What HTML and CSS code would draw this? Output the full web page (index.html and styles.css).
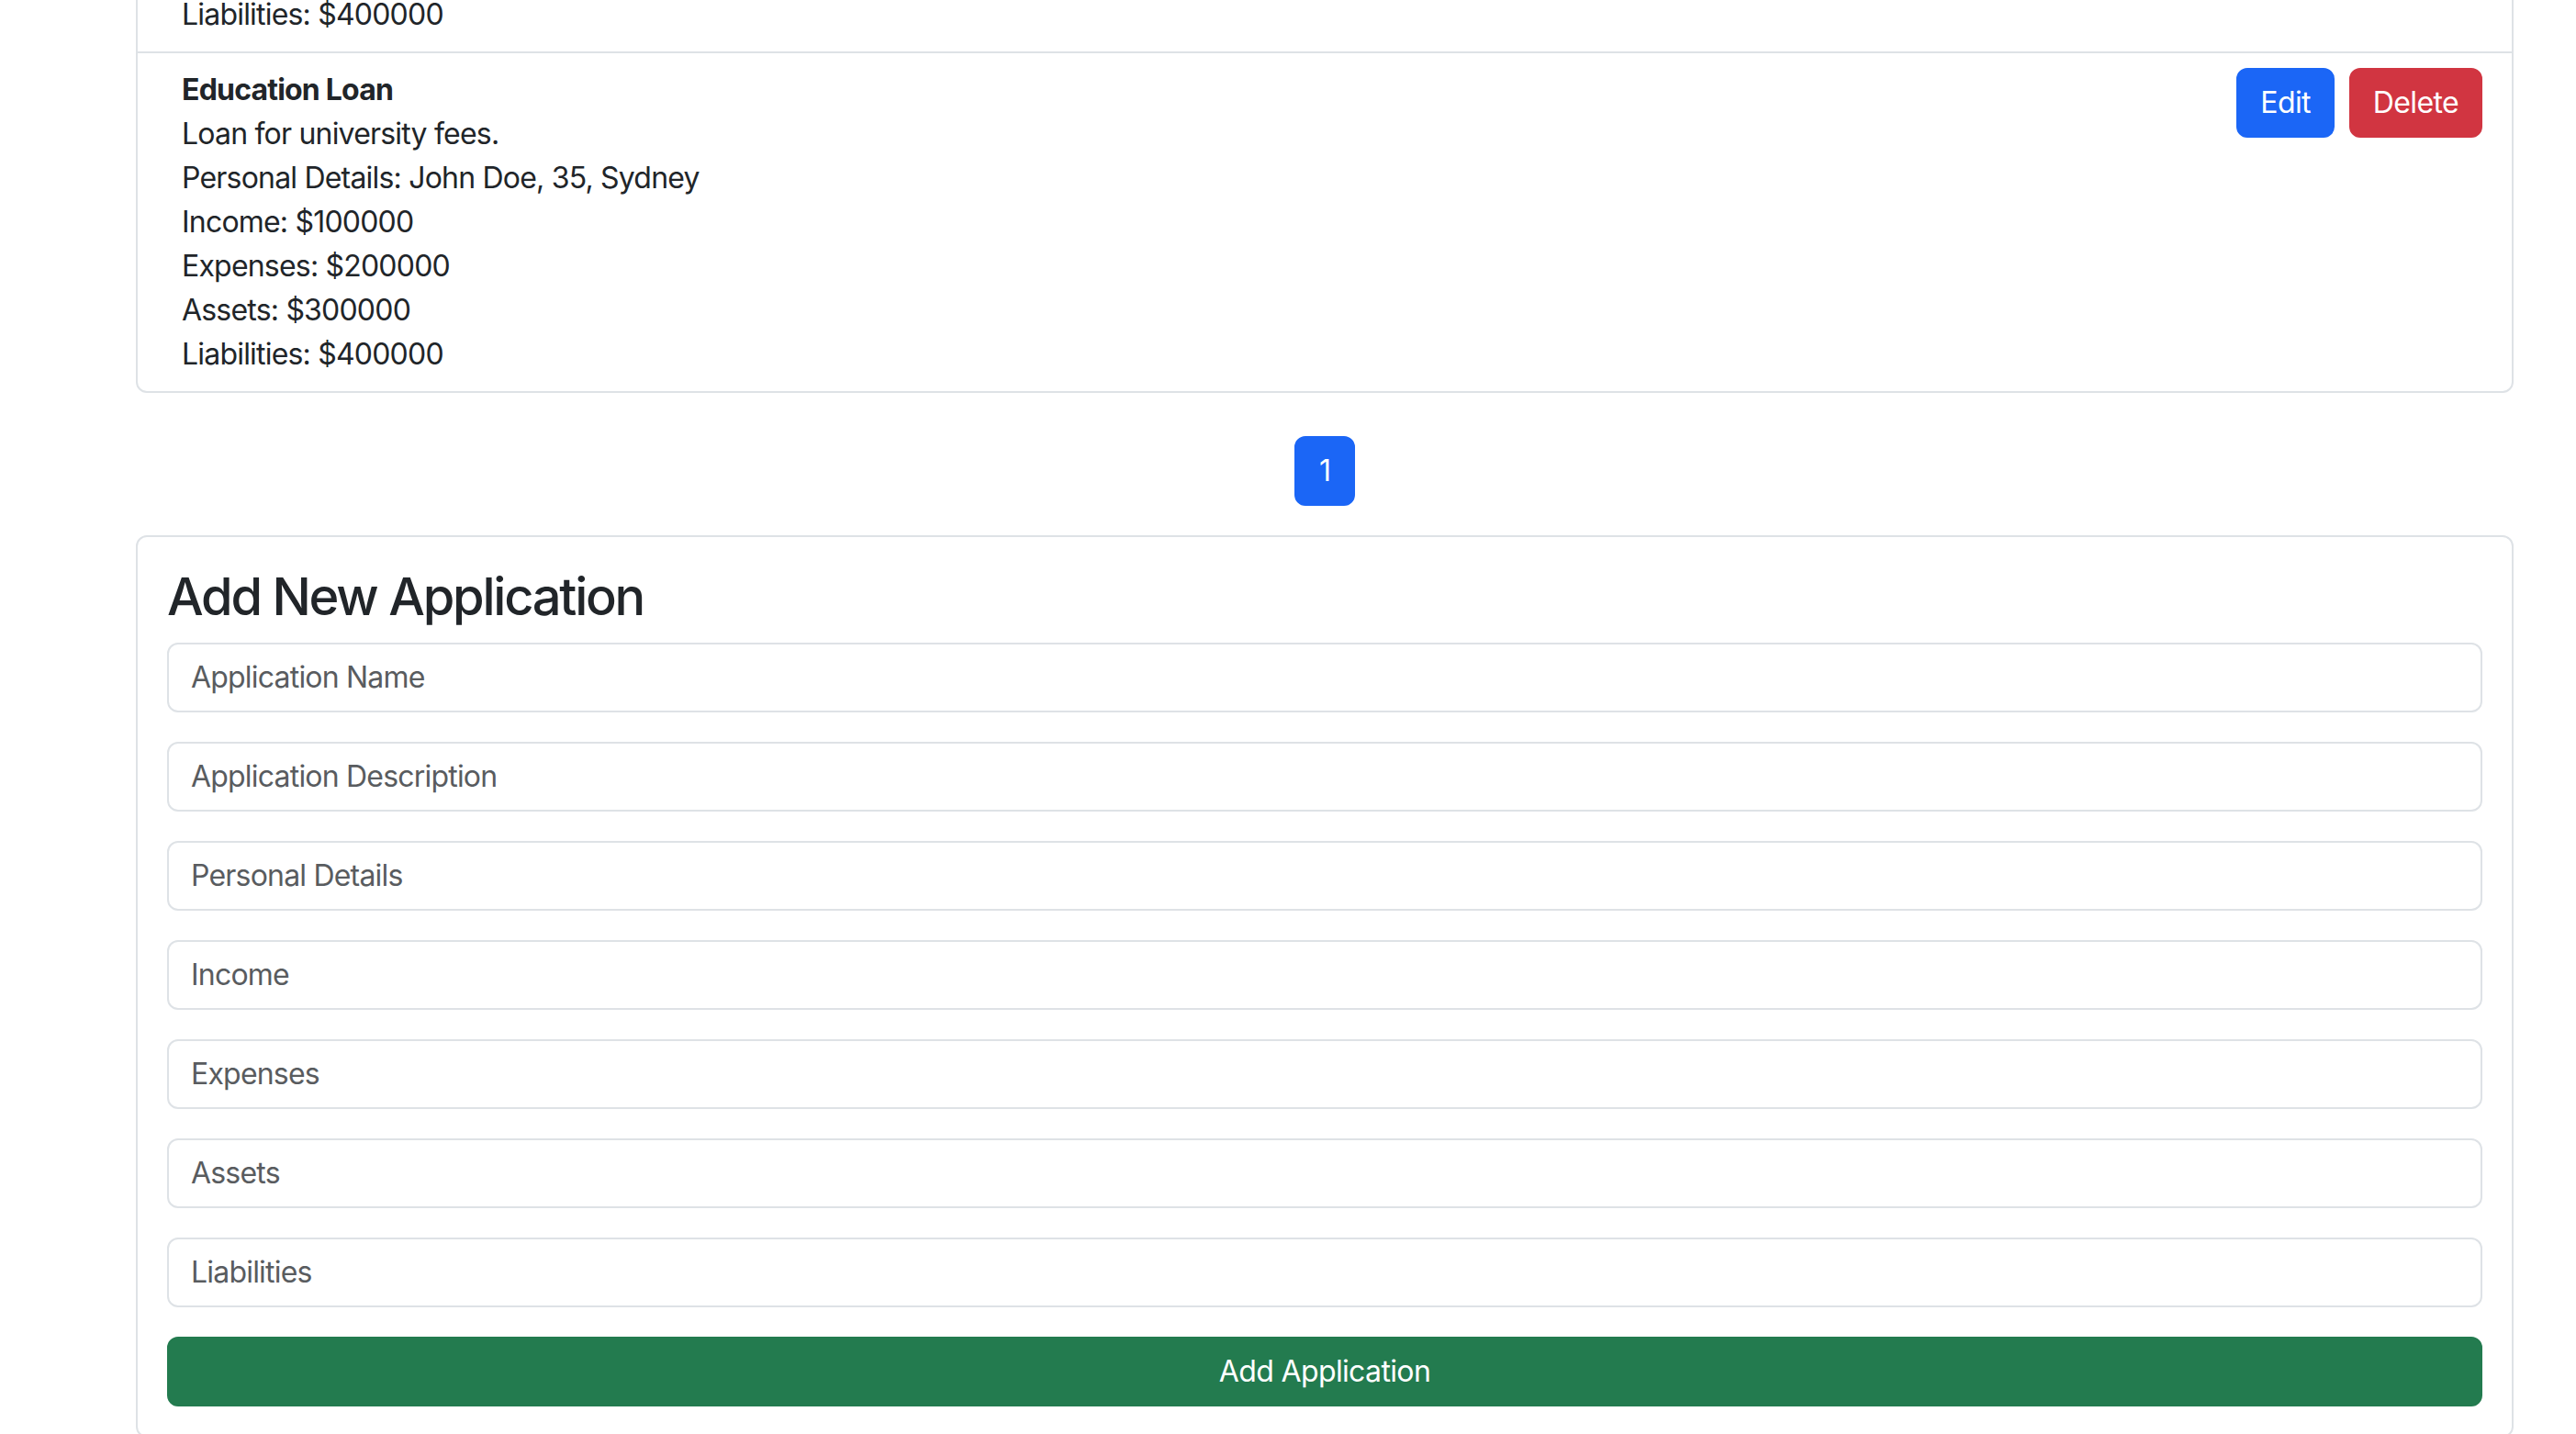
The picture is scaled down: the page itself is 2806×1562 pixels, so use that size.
FILE: index.html
```html
<!DOCTYPE html>
<html lang="en">
<head>
<meta charset="utf-8">
<title>Loan Applications</title>
<link rel="stylesheet" href="styles.css">
</head>
<body>
<main class="container">
  <ul class="app-list">
    <li class="app-item">
      <div class="app-info">
        <strong class="app-title">Home Loan</strong>
        <div>Loan for buying a house.</div>
        <div>Personal Details: John Doe, 35, Sydney</div>
        <div>Income: $100000</div>
        <div>Expenses: $200000</div>
        <div>Assets: $300000</div>
        <div>Liabilities: $400000</div>
      </div>
      <div class="app-actions">
        <button class="btn btn-primary">Edit</button>
        <button class="btn btn-danger">Delete</button>
      </div>
    </li>
    <li class="app-item">
      <div class="app-info">
        <strong class="app-title">Education Loan</strong>
        <div>Loan for university fees.</div>
        <div>Personal Details: John Doe, 35, Sydney</div>
        <div>Income: $100000</div>
        <div>Expenses: $200000</div>
        <div>Assets: $300000</div>
        <div>Liabilities: $400000</div>
      </div>
      <div class="app-actions">
        <button class="btn btn-primary">Edit</button>
        <button class="btn btn-danger">Delete</button>
      </div>
    </li>
  </ul>

  <ul class="pagination">
    <li><a class="page-link active">1</a></li>
  </ul>

  <section class="card">
    <h3 class="card-title">Add New Application</h3>
    <form class="app-form">
      <input class="form-control" type="text" placeholder="Application Name">
      <input class="form-control" type="text" placeholder="Application Description">
      <input class="form-control" type="text" placeholder="Personal Details">
      <input class="form-control" type="text" placeholder="Income">
      <input class="form-control" type="text" placeholder="Expenses">
      <input class="form-control" type="text" placeholder="Assets">
      <input class="form-control" type="text" placeholder="Liabilities">
      <button class="btn btn-success btn-block" type="button">Add Application</button>
    </form>
  </section>
</main>
</body>
</html>
```
FILE: styles.css
```css
* { box-sizing: border-box; }

html, body {
  margin: 0;
  padding: 0;
  background: #ffffff;
}

body {
  font-family: Inter, "Liberation Sans", Arial, sans-serif;
  font-size: 32px;
  line-height: 48px;
  letter-spacing: -0.025em;
  color: #212529;
  overflow: hidden;
}

.container {
  width: 2590px;
  margin-left: 148px;
  margin-top: -314px;
}

.app-list {
  list-style: none;
  margin: 0;
  padding: 0;
  border: 2px solid #dee2e6;
  border-radius: 12px;
}

.app-item {
  display: flex;
  justify-content: space-between;
  align-items: flex-start;
  padding: 16px 32px 16px 48px;
}

.app-item + .app-item {
  border-top: 2px solid #dee2e6;
}

.app-info {
  display: flex;
  flex-direction: column;
}

.app-title {
  font-weight: 700;
}

.app-actions {
  display: flex;
  gap: 16px;
}

.btn {
  font-family: inherit;
  font-size: 32px;
  line-height: 48px;
  letter-spacing: -0.02em;
  padding: 12px 24px;
  border: 2px solid transparent;
  border-radius: 12px;
  color: #ffffff;
  cursor: pointer;
}

.btn-primary { background: #1b66f6; border-color: #1b66f6; }
.btn-danger { background: #d13541; border-color: #d13541; }
.btn-success { background: #237b4f; border-color: #237b4f; }

.pagination {
  list-style: none;
  display: flex;
  justify-content: center;
  margin: 47px 0 32px;
  padding: 0;
}

.page-link {
  display: block;
  min-width: 66px;
  padding: 12px 22px;
  border: 2px solid #1b66f6;
  border-radius: 12px;
  background: #1b66f6;
  color: #ffffff;
  text-align: center;
}

.card {
  border: 2px solid #dee2e6;
  border-radius: 12px;
  padding: 32px;
}

.card-title {
  margin: 0 0 16px;
  font-size: 56px;
  line-height: 67px;
  font-weight: 500;
  letter-spacing: -0.04em;
}

.app-form {
  display: flex;
  flex-direction: column;
  gap: 32px;
}

.form-control {
  display: block;
  width: 100%;
  font-family: inherit;
  font-size: 32px;
  line-height: 48px;
  letter-spacing: -0.025em;
  padding: 12px 24px;
  border: 2px solid #dee2e6;
  border-radius: 12px;
  color: #212529;
  background: #ffffff;
}

.form-control::placeholder {
  color: #595c5f;
}

.btn-block {
  width: 100%;
  text-align: center;
}
```
